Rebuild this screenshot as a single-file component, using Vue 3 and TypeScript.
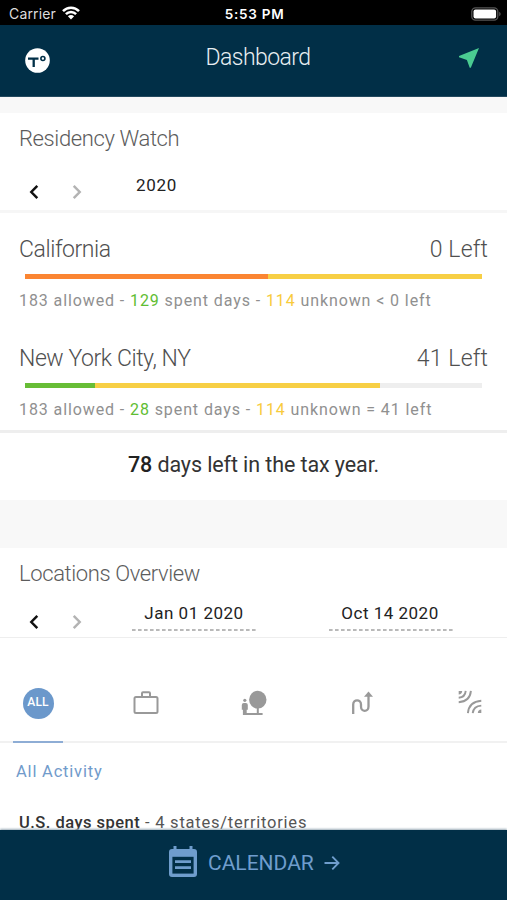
<script setup lang="ts">
interface Residency {
  name: string
  left: number
  spent: number
  unknown: number
  sign: string
  spentColor: string
  spentPct: number
  unknownPct: number
}

const residencies: Residency[] = [
  { name: 'California', left: 0, spent: 129, unknown: 114, sign: '<', spentColor: '#fb8532', spentPct: 53.1, unknownPct: 46.9 },
  { name: 'New York City, NY', left: 41, spent: 28, unknown: 114, sign: '=', spentColor: '#67bd36', spentPct: 15.3, unknownPct: 62.3 },
]
</script>

<template>
  <div class="screen">
    <div class="status">
      <div class="carrier">
        <span>Carrier</span>
        <svg width="18" height="14" viewBox="0 0 18 14" fill="none" stroke="#fff" stroke-width="2.5">
          <path d="M1 5.1C5.4.5 12.600.5 17 5.100" />
          <path d="M3.900 8.200C6.700 5.300 11.300 5.300 14.100 8.200" />
          <path d="M9 13.500L5.900 10.300Q9 7.600 12.100 10.300Z" fill="#fff" stroke="none" />
        </svg>
      </div>
      <span class="clock">5:53 PM</span>
      <div class="power">
        <svg width="30" height="14" viewBox="0 0 30 14">
          <rect x=".8" y=".8" width="26" height="12.400" rx="3.700" fill="none" stroke="#555" stroke-width="1.300" />
          <rect x="2.500" y="2.500" width="22.600" height="9" rx="2" fill="#fff" />
          <path d="M28.200 4.700Q29.700 5.500 29.700 7T28.200 9.300Z" fill="#555" />
        </svg>
      </div>
    </div>

    <header class="header">
      <svg class="logo" width="26" height="26" viewBox="0 0 26 26">
        <circle cx="13.500" cy="13.500" r="12.300" fill="#fff" />
        <path d="M4 11.700H14.500M9.700 11.700V20" stroke="#012f47" stroke-width="2.300" fill="none" />
        <circle cx="18.900" cy="11.500" r="2" fill="none" stroke="#012f47" stroke-width="1.600" />
      </svg>
      <h1 class="title">Dashboard</h1>
      <svg class="locate" width="22" height="22" viewBox="0 0 22 22">
        <path d="M21 1L12.800 20.800H11.700L8.900 12.900L1 10.300V9.100Z" fill="#4acb91" />
      </svg>
    </header>

    <main class="content">
      <section class="card residency">
        <h2 class="heading watch">Residency Watch</h2>
        <div class="pager">
          <svg class="chev" width="12" height="16" viewBox="0 0 12 16"><path d="M9.300 1.800L3.300 8L9.300 14.200" /></svg>
          <svg class="chev next" width="12" height="16" viewBox="0 0 12 16"><path d="M2.700 1.800L8.700 8L2.700 14.200" /></svg>
          <span class="year">2020</span>
        </div>
        <article v-for="r in residencies" :key="r.name" class="place">
          <div class="row">
            <span class="name">{{ r.name }}</span>
            <span class="left">{{ r.left }} Left</span>
          </div>
          <div class="bar">
            <div :style="{ width: r.spentPct + '%', background: r.spentColor }"></div>
            <div class="unknown-bar" :style="{ width: r.unknownPct + '%' }"></div>
          </div>
          <p class="meta">183 allowed - <b class="spent">{{ r.spent }}</b> spent days - <b class="unknown">{{ r.unknown }}</b> unknown {{ r.sign }} {{ r.left }} left</p>
        </article>
        <div class="remaining"><span><b>78</b> days left in the tax year.</span></div>
      </section>

      <section class="card locations">
        <h2 class="heading overview">Locations Overview</h2>
        <div class="pager range">
          <svg class="chev" width="12" height="16" viewBox="0 0 12 16"><path d="M9.300 1.800L3.300 8L9.300 14.200" /></svg>
          <svg class="chev next" width="12" height="16" viewBox="0 0 12 16"><path d="M2.700 1.800L8.700 8L2.700 14.200" /></svg>
          <div class="date from">
            <span>Jan 01 2020</span>
            <svg width="124" height="2"><path d="M0 1H124" stroke="#b9b9b9" stroke-width="2" stroke-dasharray="3.600 2.400" /></svg>
          </div>
          <div class="date to">
            <span>Oct 14 2020</span>
            <svg width="124" height="2"><path d="M0 1H124" stroke="#b9b9b9" stroke-width="2" stroke-dasharray="3.600 2.400" /></svg>
          </div>
        </div>
        <nav class="tabs">
          <div class="tab active"><span class="all">ALL</span></div>
          <div class="tab">
            <svg width="26" height="26" viewBox="0 0 26 26" fill="none" stroke="#999" stroke-width="2">
              <rect x="1.500" y="7" width="23" height="16" rx="1.500" />
              <path d="M9 7V3.300Q9 2.300 10 2.300H16Q17 2.300 17 3.300V7" />
            </svg>
          </div>
          <div class="tab">
            <svg width="26" height="26" viewBox="0 0 26 26" fill="#999">
              <ellipse cx="16.800" cy="9.700" rx="8.700" ry="8.900" />
              <path d="M15.800 17H17.800V23H21.600V25H1.900V19.800H.8V15Q.8 13 2.800 13H4.800Q6.800 13 6.800 15V19.800H5.700V23H15.800Z" />
              <circle cx="3.800" cy="10.300" r="1.600" />
            </svg>
          </div>
          <div class="tab">
            <svg width="24" height="26" viewBox="0 0 24 26">
              <path d="M3.200 24V14.500C3.200 8.900 11 8.900 11 14.500V16.500C11 22.300 18.500 22.300 18.500 16.500V5" fill="none" stroke="#999" stroke-width="2.300" />
              <path d="M18.500 1.600L23 6.800H14Z" fill="#999" />
            </svg>
          </div>
          <div class="tab">
            <svg width="24" height="24" viewBox="0 0 24 24" fill="none" stroke="#999" stroke-width="1.900">
              <path d="M.7.9H4.200Q4 4.300.7 4.500Z" fill="#999" stroke="none" />
              <path d="M.7 7.800Q7.200 7.300 7.700.9M.7 12.200Q12 11.500 12.900.9" />
              <path d="M23.300 23.100H19.800Q20 19.700 23.300 19.500Z" fill="#999" stroke="none" />
              <path d="M23.300 15.600Q15.500 16.100 14.700 23.100M23.300 10.700Q11 11.500 9.900 23.100" />
            </svg>
          </div>
        </nav>
        <div class="activity">All Activity</div>
        <div class="summary"><b>U.S. days spent</b> - 4 states/territories</div>
      </section>
    </main>

    <footer class="footer">
      <svg width="28" height="32" viewBox="0 0 28 32">
        <path d="M4.500 0H7.500V3H20.500V0H23.500V3H25Q28 3 28 6V28Q28 31 25 31H3Q0 31 0 28V6Q0 3 3 3H4.500Z" fill="#6f9dcd" />
        <path d="M3.400 10.800H24.600V27.600H3.400Z" fill="#012f47" />
        <path d="M6 15.600H22M6 21.600H22" stroke="#6f9dcd" stroke-width="2.700" />
      </svg>
      <span class="cal">CALENDAR</span>
      <svg width="16" height="16" viewBox="0 0 16 16" fill="none" stroke="#6f9dcd" stroke-width="1.900"><path d="M.5 8H14.200M8.300 1.700L14.500 8L8.300 14.300" /></svg>
    </footer>
  </div>
</template>

<style>
body { background: #fff; overflow: hidden; }
</style>

<style scoped>
* { box-sizing: border-box; margin: 0; }
svg { display: block; flex: none; }
.screen { width: 507px; height: 900px; display: flex; flex-direction: column; overflow: hidden; font-family: Roboto, "Liberation Sans", sans-serif; background: #f8f8f8; white-space: nowrap; }
.status { height: 25px; flex: none; display: grid; grid-template-columns: 1fr auto 1fr; align-items: center; background: #000; color: #fff; padding: 2px 7px 0 9px; font-family: Inter, sans-serif; font-size: 14px; }
.carrier { display: flex; gap: 6px; align-items: center; color: #ddd; letter-spacing: .15px; }
.carrier svg { margin-top: -2px; }
.clock { font-weight: 600; font-size: 13.500px; letter-spacing: .75px; }
.power { display: flex; justify-content: flex-end; margin-right: -1px; }
.header { height: 72px; flex: none; display: flex; justify-content: space-between; background: #012f47; border-bottom: 1px solid #23495e; padding: 0 27px 0 24px; }
.logo { margin-top: 22px; }
.locate { margin-top: 22px; }
.title { font-size: 23px; font-weight: 300; line-height: 30px; margin: 18px 0 0 8px; color: #e8eef2; letter-spacing: -.55px; }
.content { flex: 1; min-height: 0; display: flex; flex-direction: column; gap: 48px; padding-top: 16px; overflow: hidden; }
.card { background: #fff; flex: none; }
.residency { height: 387px; }
.heading { font-weight: 300; font-size: 22px; line-height: 30px; color: #5c5c5c; padding: 11px 0 0 19px; letter-spacing: -.38px; }
.pager { height: 59px; display: flex; align-items: flex-start; padding-left: 28px; border-bottom: 3px solid #f6f6f6; }
.chev { fill: none; stroke: #111; stroke-width: 2.500; margin-top: 30px; }
.chev.next { stroke: #b3b3b3; margin-left: 31px; }
.year { margin-left: 53px; margin-top: 20px; font-size: 17px; line-height: 22px; color: #222; letter-spacing: .7px; }
.place { height: 109px; padding: 20px 19px 0; }
.place + .place { height: 108px; }
.row { display: flex; justify-content: space-between; font-weight: 300; font-size: 23px; line-height: 34px; color: #505050; }
.name { letter-spacing: -.43px; }
.left { letter-spacing: .15px; }
.bar { height: 5px; display: flex; margin: 7px 6px 0; background: #eee; }
.unknown-bar { background: #f7cf45; }
.meta { font-size: 16px; line-height: 22px; margin-top: 11px; color: #909090; letter-spacing: .9px; }
.meta b { font-weight: 400; }
.meta .spent { color: #5fbd32; }
.meta .unknown { color: #f8cb3c; }
.remaining { height: 70px; border-top: 3px solid #eee; text-align: center; font-size: 21.500px; line-height: 64px; color: #333; letter-spacing: -.1px; }
.remaining b { font-weight: 500; color: #222; }
.locations { height: 340px; }
.range { height: 49px; border-bottom: 1px solid #eee; }
.range .chev { margin-top: 25px; }
.date { width: 124px; text-align: center; font-size: 17px; line-height: 22px; color: #222; letter-spacing: .5px; padding-top: 13px; }
.date svg { margin-top: 5px; }
.from { margin-left: 49px; }
.to { margin-left: 73px; }
.to span { margin-right: 2px; }
.tabs { height: 105px; display: flex; justify-content: space-between; padding: 0 12px 0 13px; border-bottom: 2px solid #f1f1f1; }
.tab { width: 50px; height: 105px; display: flex; align-items: flex-start; justify-content: center; padding-top: 52px; }
.active { border-bottom: 2px solid #8eadd5; padding-top: 50px; }
.all { width: 31px; height: 31px; border-radius: 50%; background: #6b98cb; color: #fff; font-size: 12px; font-weight: 500; text-align: center; line-height: 29px; letter-spacing: .2px; }
.activity { font-size: 16.500px; line-height: 22px; color: #719bcb; margin: 18px 0 0 16px; letter-spacing: .8px; }
.summary { font-size: 16.500px; line-height: 22px; margin: 29px 0 0 19px; color: #555; letter-spacing: .77px; }
.summary b { font-weight: 500; color: #333; letter-spacing: .47px; }
.footer { height: 70px; flex: none; background: #012f47; display: flex; align-items: flex-start; padding-left: 169px; color: #6f9dcd; box-shadow: 0 -1px 2px #9aabb6; z-index: 1; }
.footer svg { margin-top: 16px; }
.cal { font-size: 21px; line-height: 30px; margin: 18px 0 0 11px; letter-spacing: 0; width: 116px; font-weight: 400; }
.footer .cal + svg { margin-top: 25px; }
</style>
